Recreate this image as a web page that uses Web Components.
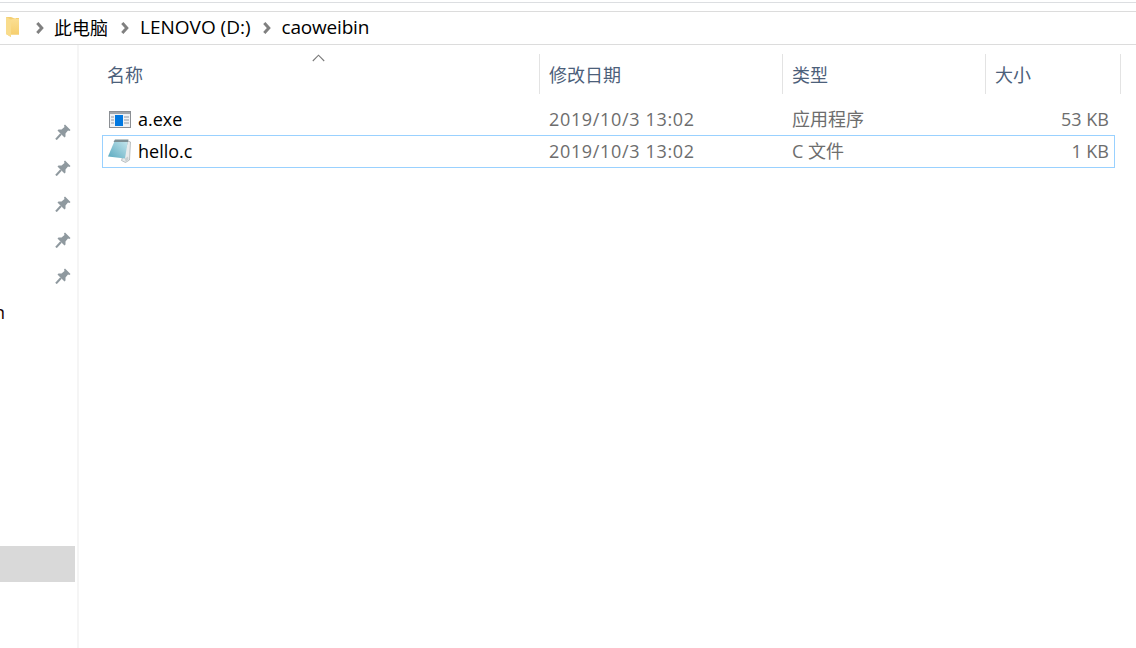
<!DOCTYPE html>
<html lang="zh">
<head>
<meta charset="utf-8">
<title>caoweibin</title>
<style>
  html, body { margin: 0; height: 100%; background: #fff; overflow: hidden; }
  body { font: 18px "Open Sans", "Noto Sans CJK SC", sans-serif; color: #000; }
</style>
</head>
<body>
<explorer-window>
  <address-bar></address-bar>
  <div slot="main" style="display:flex;flex:1;min-height:0">
    <nav-pane>
      <nav-row pinned></nav-row>
      <nav-row pinned></nav-row>
      <nav-row pinned></nav-row>
      <nav-row pinned></nav-row>
      <nav-row pinned></nav-row>
      <nav-row>n</nav-row>
      <nav-row></nav-row>
      <nav-row></nav-row>
      <nav-row></nav-row>
      <nav-row></nav-row>
      <nav-row></nav-row>
      <nav-row></nav-row>
      <nav-row selected></nav-row>
    </nav-pane>
    <file-list>
      <file-row name="a.exe" date="2019/10/3 13:02" type="应用程序" size="53 KB" icon="exe"></file-row>
      <file-row name="hello.c" date="2019/10/3 13:02" type="C 文件" size="1 KB" icon="note" focused></file-row>
    </file-list>
  </div>
</explorer-window>

<script>
class ExplorerWindow extends HTMLElement {
  constructor() {
    super();
    this.attachShadow({ mode: "open" });
    this.shadowRoot.innerHTML = `
    <style>
    :host { display:flex; flex-direction:column; height:648px; }
    .strip { height:8px; margin-top:2px; border-top:1px solid #dcdee1; border-bottom:1px solid #dcdcdc; }
    .body { flex:1; display:flex; flex-direction:column; min-height:0; }
    </style>
    <div class="strip"></div>
    <slot></slot>
    <div class="body"><slot name="main"></slot></div>`;
  }
}

class AddressBar extends HTMLElement {
  constructor() {
    super();
    this.attachShadow({ mode: "open" });
    const chevron = `<svg class="chev" width="10" height="12" viewBox="0 0 10 12"><path d="M2.300 1 6.800 6 2.300 11" fill="none" stroke="#808080" stroke-width="3"/></svg>`;
    this.shadowRoot.innerHTML = `
    <style>
    :host { display:flex; align-items:center; height:32px; border-bottom:1px solid #dcdcdc; font-size:19px; }
    .inner { display:flex; align-items:center; margin-top:-3px; }
    .folder { margin-left:6px; flex:none; }
    .gap { width:15px; flex:none; }
    .chev { flex:none; margin:3px 10px 0 0; }
    .chev.first { margin-right:9px; }
    span { white-space:nowrap; margin-right:11px; }
    .cjk { font-size:18px; margin-right:12px; }
    .last { letter-spacing:-.2px; }
    </style>
    <div class="inner">
    <svg class="folder" width="14" height="21" viewBox="0 0 14 21">
      <defs><linearGradient id="f" x1="0" y1="0" x2="0" y2="1"><stop offset="0" stop-color="#fbdf93"/><stop offset="1" stop-color="#f6cf6f"/></linearGradient></defs>
      <path d="M0 1h5l5 2v-1h3v16.500H5V21L0 18z" fill="#f4cf72"/>
      <path d="M5 3.500 10 2v1h3v15.500H5z" fill="url(#f)"/>
      <path d="M0 1 5 3.500V21L0 18z" fill="#f9dc8c"/>
    </svg>
    <div class="gap"></div>
    ${chevron.replace('class="chev"', 'class="chev first"')}<span class="cjk">此电脑</span>${chevron}<span>LENOVO (D:)</span>${chevron}<span class="last">caoweibin</span>
    </div>`;
  }
}

class NavPane extends HTMLElement {
  constructor() {
    super();
    this.attachShadow({ mode: "open" });
    this.shadowRoot.innerHTML = `
    <style>
    :host { display:block; flex:none; width:75px; margin-right:2px; padding-top:69px; }
    </style>
    <slot></slot>`;
  }
}

class NavRow extends HTMLElement {
  constructor() {
    super();
    this.attachShadow({ mode: "open" });
    this.shadowRoot.innerHTML = `
    <style>
    :host { display:flex; align-items:center; height:36px; position:relative; color:#200000; font-size:18px; }
    :host([selected]) { background:#d9d9d9; }
    svg { position:absolute; left:55px; top:10px; }
    .label { margin-left:-6px; }
    </style>
    <div class="label"><slot></slot></div>`;
    if (this.hasAttribute("pinned")) {
      this.shadowRoot.innerHTML += `
      <svg width="16" height="16" viewBox="0 0 16 16">
        <path d="M10 .5 15.500 6l-1 1-1.500-.5-2.500 3v3l-1 1-7-7 1-1h3l3-2.500L9 1.500z" fill="#8f999f"/>
        <path d="M6 10 1 15.500" stroke="#8f999f" stroke-width="2" fill="none"/>
      </svg>`;
    }
  }
}

class FileList extends HTMLElement {
  constructor() {
    super();
    this.attachShadow({ mode: "open" });
    this.shadowRoot.innerHTML = `
    <style>
    :host { display:block; flex:1; min-width:0; border-left:2px solid #f5f5f5; padding-top:9px; }
    .head { display:grid; grid-template-columns:461px 243px 203px 135px; height:40px; margin-bottom:9px; position:relative; }
    .col { border-right:1px solid #e3e3e3; color:#4c607a; font-size:18px; display:flex; align-items:center; padding-left:9px; }
    .col:first-child { padding-left:28px; }
    .sort { position:absolute; left:233px; top:0; }
    .rows { margin-left:23px; }
    </style>
    <div class="head">
      <div class="col">名称</div>
      <div class="col">修改日期</div>
      <div class="col">类型</div>
      <div class="col">大小</div>
      <svg class="sort" width="13" height="8" viewBox="0 0 13 8"><path d="M.8 7 6.500 1.200 12.200 7" fill="none" stroke="#7a7a7a" stroke-width="1.100"/></svg>
    </div>
    <div class="rows"><slot></slot></div>`;
  }
}

class FileRow extends HTMLElement {
  constructor() {
    super();
    this.attachShadow({ mode: "open" });
    const icons = {
      exe: `<svg width="22" height="17" viewBox="0 0 22 17">
        <rect x=".5" y=".5" width="21" height="16" fill="#eef1f4" stroke="#8b8f94"/>
        <rect x="1" y="1" width="20" height="2" fill="#a0a6ac"/>
        <rect x="6" y="4" width="8" height="11" fill="#0078e0"/>
        <path d="M2 6h3M2 9h3M2 12h3M15 6h5M15 9h5M15 12h5" stroke="#9099a3"/>
      </svg>`,
      note: `<svg width="23" height="24" viewBox="0 0 23 24">
        <defs><linearGradient id="n" x1="1" y1="0" x2="0" y2="1"><stop offset="0" stop-color="#c8e8ee"/><stop offset="1" stop-color="#58a8bf"/></linearGradient></defs>
        <path d="M20 2l2.500 1-1 18-4 2.500-4-2z" fill="#e8ebec" stroke="#a4abae" stroke-width=".7"/>
        <path d="M7 1h13l-3 18.500L0 17.500z" fill="url(#n)"/>
        <path d="M7 .5h13.500l-.5 2.500H5.500z" fill="#7d8f94"/>
        <path d="M17 19.500l3-2 .5 3-3 2.500z" fill="#c9d0d2"/>
      </svg>`,
    };
    const g = (a) => this.getAttribute(a);
    this.shadowRoot.innerHTML = `
    <style>
    :host { display:grid; grid-template-columns:437px 243px 203px 123px; height:32px; align-items:center; box-sizing:border-box; border:1px solid transparent; width:1013px; }
    :host([focused]) { border-color:#99d1ff; height:33px; padding-bottom:1px; }
    .name { display:flex; align-items:center; color:#000; }
    .icon { width:33px; margin-right:2px; display:flex; justify-content:center; flex:none; }
    .date, .type, .size { color:#6d6d6d; }
    .date { padding-left:9px; letter-spacing:.66px; }
    .type { padding-left:9px; padding-bottom:2px; }
    .size { text-align:right; }
    </style>
    <div class="name"><span class="icon">${icons[g("icon")]}</span><span>${g("name")}</span></div>
    <div class="date">${g("date")}</div>
    <div class="type">${g("type")}</div>
    <div class="size">${g("size")}</div>`;
  }
}

customElements.define("explorer-window", ExplorerWindow);
customElements.define("address-bar", AddressBar);
customElements.define("nav-pane", NavPane);
customElements.define("nav-row", NavRow);
customElements.define("file-list", FileList);
customElements.define("file-row", FileRow);
</script>
</body>
</html>
